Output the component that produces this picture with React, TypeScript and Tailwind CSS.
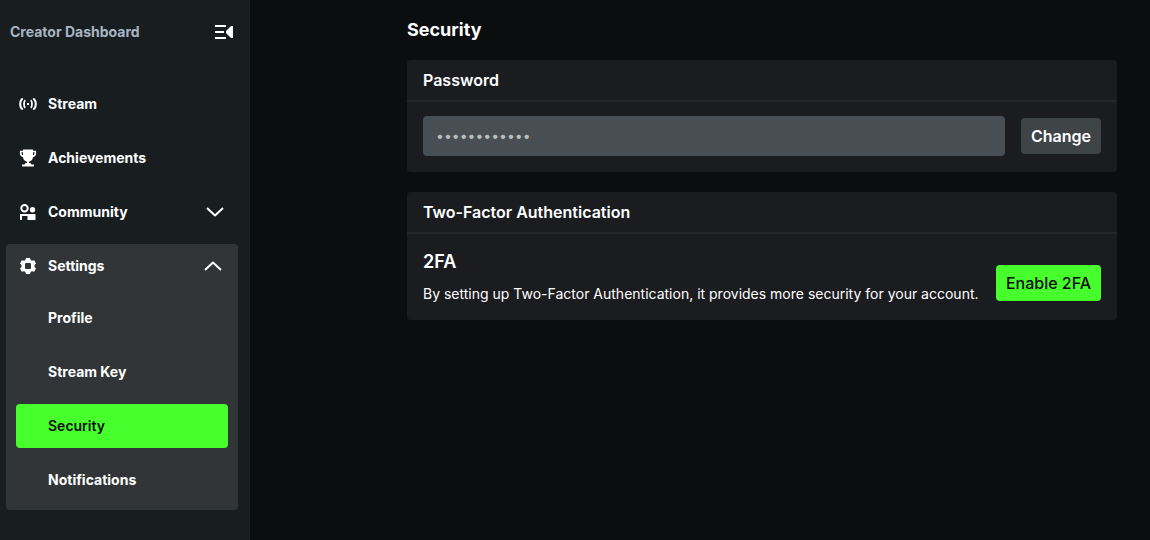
import React, { useState } from "react";

function CollapseIcon() {
  return (
    <svg width="18" height="14" viewBox="0 0 18 14" fill="currentColor" aria-hidden="true">
      <path d="M0 0h11v2H0zM0 6h9v2H0zM0 12h11v2H0zM18 1v12h-2l-5-5V6l5-5z" />
    </svg>
  );
}

function StreamIcon() {
  return (
    <svg width="18" height="18" viewBox="0 0 18 18" fill="none" stroke="currentColor" strokeWidth="2" aria-hidden="true">
      <path d="M3.800 3.500C2 4.500 1.200 6 1.200 9s.8 4.500 2.600 5.500M14.200 3.500C16 4.500 16.800 6 16.800 9s-.8 4.500-2.600 5.500" />
      <path d="M6.300 5.200C5.200 6 5 7.200 5 9s.2 3 1.300 3.800M11.700 5.200C12.800 6 13 7.200 13 9s-.2 3-1.300 3.800" strokeWidth="1.800" />
      <rect x="8" y="8" width="2" height="2" fill="currentColor" stroke="none" />
    </svg>
  );
}

function TrophyIcon() {
  return (
    <svg width="18" height="18" viewBox="0 0 18 18" fill="currentColor" aria-hidden="true">
      <path d="M4 .5h10v7.500c0 2.200-1.500 4-4 4.700V14h1.500l1 1.500H15v2H3v-2h2.500l1-1.500H8v-1.300C5.500 12 4 10.200 4 8z" />
      <path d="M4.500 2.500H1.700v1.800c0 1.800 1.200 3 3.300 3.200M13.500 2.500h2.800v1.800c0 1.800-1.200 3-3.300 3.200" fill="none" stroke="currentColor" strokeWidth="1.700" />
    </svg>
  );
}

function CommunityIcon() {
  return (
    <svg width="18" height="18" viewBox="0 0 18 18" fill="currentColor" aria-hidden="true">
      <circle cx="5.500" cy="5.300" r="3.200" fill="none" stroke="currentColor" strokeWidth="2" />
      <circle cx="13.500" cy="6.700" r="2.700" />
      <path d="M1 17v-6h15.500v6h-8v-4H3v4z" />
    </svg>
  );
}

function SettingsIcon() {
  return (
    <svg width="18" height="18" viewBox="0 0 18 18" fill="currentColor" aria-hidden="true">
      <path
        fillRule="evenodd"
        d="M7 1h4l.6 2 1.300.7 2.200-.5 1.900 3.200L15.500 8v2l1.500 1.600-1.900 3.200-2.200-.5-1.300.7-.6 2H7l-.6-2-1.300-.7-2.200.5L1 11.600 2.500 10V8L1 6.400l1.900-3.200 2.200.5L6.400 3zM6.700 6L6 6.700v4.600l.7.7h4.600l.7-.7V6.700l-.7-.7z"
      />
    </svg>
  );
}

function Chevron({ up }: { up: boolean }) {
  return (
    <svg width="18" height="10" viewBox="0 0 18 10" fill="none" stroke="currentColor" strokeWidth="2" strokeLinejoin="round" aria-hidden="true">
      <path d={up ? "M1 9l8-7.500L17 9" : "M1 1l8 7.500L17 1"} />
    </svg>
  );
}

const rowClass = "flex h-11 w-full items-center gap-[11px] rounded pl-[13px] text-left";
const subLinks = ["Profile", "Stream Key", "Security", "Notifications"];

function Sidebar() {
  const [open, setOpen] = useState(true);
  return (
    <aside className="w-[250px] shrink-0 bg-[#181d1f] text-sm font-bold text-white">
      <div className="flex h-16 items-center justify-between pr-[17px] pl-[10px]">
        <span className="text-[#a9b5c4]">Creator Dashboard</span>
        <button type="button" aria-label="Collapse sidebar">
          <CollapseIcon />
        </button>
      </div>
      <nav className="flex flex-col gap-[10px] pt-[18px] pr-3 pl-[6px]" aria-label="Dashboard">
        <a href="#stream" className={rowClass}>
          <StreamIcon />
          Stream
        </a>
        <a href="#achievements" className={rowClass}>
          <TrophyIcon />
          Achievements
        </a>
        <button type="button" className={`${rowClass} pr-[14px]`} aria-expanded="false">
          <CommunityIcon />
          <span className="flex-1">Community</span>
          <Chevron up={false} />
        </button>
        <div className="rounded bg-[#323537]">
          <button type="button" className={`${rowClass} pr-4`} aria-expanded={open} onClick={() => setOpen(!open)}>
            <SettingsIcon />
            <span className="flex-1">Settings</span>
            <Chevron up={open} />
          </button>
          {open && (
            <ul className="flex flex-col gap-[10px] px-[10px] py-2">
              {subLinks.map((label) => (
                <li key={label}>
                  <a
                    href="#settings"
                    aria-current={label === "Security" ? "page" : undefined}
                    className={`flex h-11 items-center rounded pl-8 ${label === "Security" ? "bg-[#46ff2d] font-semibold text-[#0b0e0f]" : ""}`}
                  >
                    {label}
                  </a>
                </li>
              ))}
            </ul>
          )}
        </div>
      </nav>
    </aside>
  );
}

function Card({ title, children }: { title: string; children: React.ReactNode }) {
  return (
    <section className="rounded bg-[#1b1c1f]">
      <h2 className="border-b-2 border-[#25272b] px-4 py-2 text-base leading-6 font-semibold">{title}</h2>
      <div className="flex gap-4 px-4 pt-[14px] pb-4">{children}</div>
    </section>
  );
}

export default function App() {
  return (
    <div className="flex min-h-screen bg-[#0b0e0f] font-['Inter',sans-serif] text-white">
      <Sidebar />
      <main className="min-w-0 flex-1 pt-4 pr-[33px] pb-8 pl-[157px]">
        <h1 className="mb-4 text-lg leading-7 font-bold">Security</h1>
        <div className="flex flex-col gap-5">
          <Card title="Password">
            <input
              type="password"
              aria-label="Password"
              placeholder="••••••••••••"
              className="h-10 min-w-0 flex-1 rounded bg-[#474f54] px-[13px] pb-[2px] text-sm placeholder:text-[#b9bcbe]"
            />
            <button type="button" className="h-9 self-center rounded bg-[#3f4446] px-[10px] text-base font-semibold">
              Change
            </button>
          </Card>
          <Card title="Two-Factor Authentication">
            <div className="min-w-0 flex-1">
              <h3 className="mb-2 text-lg leading-7 font-semibold">2FA</h3>
              <p className="text-sm">
                By setting up Two-Factor Authentication, it provides more security for your account.
              </p>
            </div>
            <button
              type="button"
              className="mb-[3px] h-9 shrink-0 self-end rounded bg-[#46ff2d] px-[10px] text-base font-medium text-[#0b0e0f]"
            >
              Enable 2FA
            </button>
          </Card>
        </div>
      </main>
    </div>
  );
}
